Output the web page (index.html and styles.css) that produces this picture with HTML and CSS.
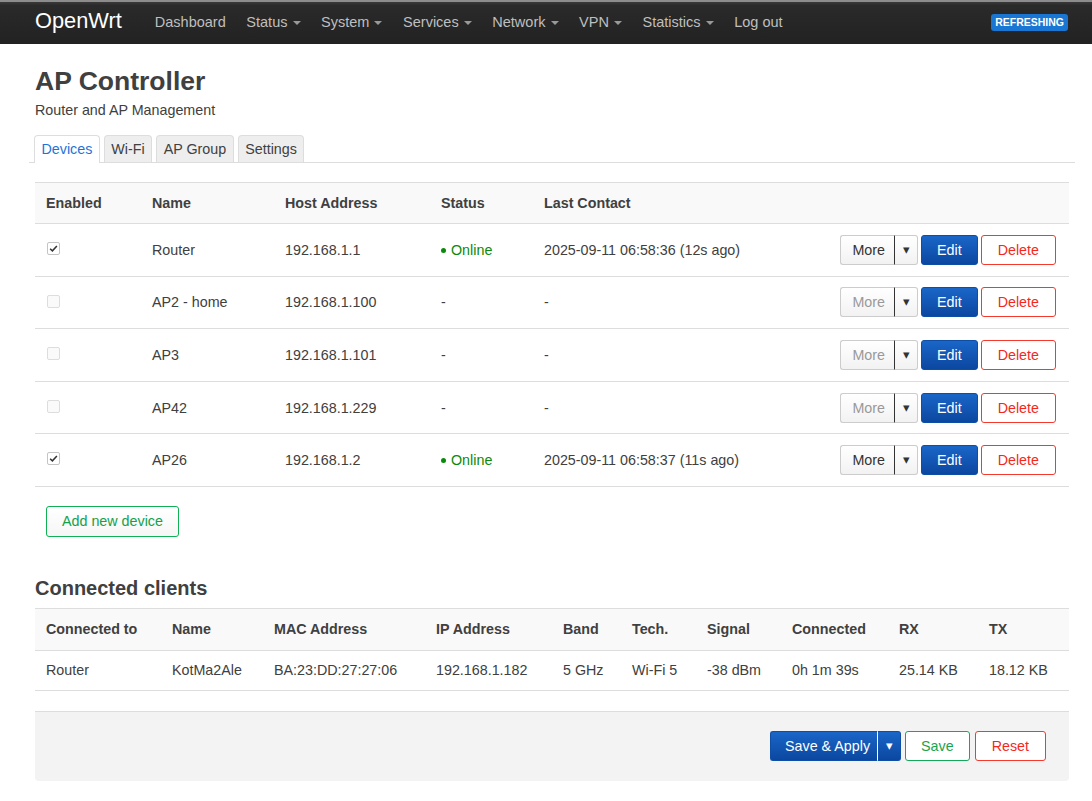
FILE: index.html
```html
<!DOCTYPE html>
<html>
<head>
<meta charset="utf-8">
<link rel="stylesheet" href="styles.css">
</head>
<body>
<header class="topbar">
  <a class="brand">OpenWrt</a>
  <ul class="nav">
    <li>Dashboard</li>
    <li>Status <span class="caret"></span></li>
    <li>System <span class="caret"></span></li>
    <li>Services <span class="caret"></span></li>
    <li>Network <span class="caret"></span></li>
    <li>VPN <span class="caret"></span></li>
    <li>Statistics <span class="caret"></span></li>
    <li>Log out</li>
  </ul>
  <span class="badge">REFRESHING</span>
</header>

<main class="container">
  <h2 class="title">AP Controller</h2>
  <div class="desc">Router and AP Management</div>

  <ul class="tabs">
    <li class="tab active">Devices</li>
    <li class="tab">Wi-Fi</li>
    <li class="tab">AP Group</li>
    <li class="tab">Settings</li>
  </ul>

  <table class="tbl devices">
    <thead>
      <tr><th class="c1">Enabled</th><th class="c2">Name</th><th class="c3">Host Address</th><th class="c4">Status</th><th class="c5">Last Contact</th><th></th></tr>
    </thead>
    <tbody>
      <tr>
        <td><span class="cb on"><svg viewBox="0 0 13 13" width="11" height="11"><path d="M2.5 6.8 L5.2 9.3 L10.5 3.6" fill="none" stroke="#333" stroke-width="1.8"/></svg></span></td>
        <td>Router</td><td>192.168.1.1</td><td class="online"><span class="dot"></span>Online</td><td>2025-09-11 06:58:36 (12s ago)</td>
        <td class="acts"><span class="split"><span class="btn more">More</span><span class="btn drop">&#9662;</span></span><span class="btn edit">Edit</span><span class="btn del">Delete</span></td>
      </tr>
      <tr>
        <td><span class="cb"></span></td>
        <td>AP2 - home</td><td>192.168.1.100</td><td>-</td><td>-</td>
        <td class="acts"><span class="split"><span class="btn more dis">More</span><span class="btn drop">&#9662;</span></span><span class="btn edit">Edit</span><span class="btn del">Delete</span></td>
      </tr>
      <tr>
        <td><span class="cb"></span></td>
        <td>AP3</td><td>192.168.1.101</td><td>-</td><td>-</td>
        <td class="acts"><span class="split"><span class="btn more dis">More</span><span class="btn drop">&#9662;</span></span><span class="btn edit">Edit</span><span class="btn del">Delete</span></td>
      </tr>
      <tr>
        <td><span class="cb"></span></td>
        <td>AP42</td><td>192.168.1.229</td><td>-</td><td>-</td>
        <td class="acts"><span class="split"><span class="btn more dis">More</span><span class="btn drop">&#9662;</span></span><span class="btn edit">Edit</span><span class="btn del">Delete</span></td>
      </tr>
      <tr>
        <td><span class="cb on"><svg viewBox="0 0 13 13" width="11" height="11"><path d="M2.5 6.8 L5.2 9.3 L10.5 3.6" fill="none" stroke="#333" stroke-width="1.8"/></svg></span></td>
        <td>AP26</td><td>192.168.1.2</td><td class="online"><span class="dot"></span>Online</td><td>2025-09-11 06:58:37 (11s ago)</td>
        <td class="acts"><span class="split"><span class="btn more">More</span><span class="btn drop">&#9662;</span></span><span class="btn edit">Edit</span><span class="btn del">Delete</span></td>
      </tr>
    </tbody>
  </table>

  <div class="addrow"><span class="btn add">Add new device</span></div>

  <h3 class="subtitle">Connected clients</h3>
  <table class="tbl clients">
    <thead>
      <tr><th class="k1">Connected to</th><th class="k2">Name</th><th class="k3">MAC Address</th><th class="k4">IP Address</th><th class="k5">Band</th><th class="k6">Tech.</th><th class="k7">Signal</th><th class="k8">Connected</th><th class="k9">RX</th><th>TX</th></tr>
    </thead>
    <tbody>
      <tr><td>Router</td><td>KotMa2Ale</td><td>BA:23:DD:27:27:06</td><td>192.168.1.182</td><td>5 GHz</td><td>Wi-Fi 5</td><td>-38 dBm</td><td>0h 1m 39s</td><td>25.14 KB</td><td>18.12 KB</td></tr>
    </tbody>
  </table>

  <div class="actions">
    <span class="split apply"><span class="btn primary">Save &amp; Apply</span><span class="btn primary pdrop">&#9662;</span></span>
    <span class="btn save">Save</span>
    <span class="btn reset">Reset</span>
  </div>
</main>
</body>
</html>
```

FILE: styles.css
```css
* { box-sizing: border-box; }
html, body { margin: 0; padding: 0; }
body {
  font-family: "Liberation Sans", Arial, sans-serif;
  font-size: 14.3px;
  line-height: 20px;
  color: #404040;
  background: #fff;
}

.topbar {
  height: 44px;
  background: linear-gradient(#3a3a3a 0, #2a2a2a 8%, #222 100%);
  border-top: 2px solid #8c8c8c;
  display: flex;
  align-items: center;
  padding-left: 35px;
  padding-right: 24px;
}
.brand {
  color: #fff;
  font-size: 21.8px;
  line-height: 24px;
  margin-right: 22px;
  margin-top: -4px;
}
.nav {
  list-style: none;
  margin: 0;
  padding: 0;
  display: flex;
  flex: 1;
  margin-top: -2px;
}
.nav li {
  color: #bfbfbf;
  font-size: 14.5px;
  padding: 0 10.3px;
  white-space: nowrap;
}
.nav li:first-child { padding-left: 11px; }
.caret {
  display: inline-block;
  width: 0; height: 0;
  border-left: 4px solid transparent;
  border-right: 4px solid transparent;
  border-top: 4px solid #999;
  vertical-align: middle;
  margin-left: 1px;
}
.badge {
  background: #1976d2;
  color: #fff;
  font-size: 10.5px;
  font-weight: bold;
  line-height: 17px;
  padding: 0 4px;
  border-radius: 3px;
  margin-top: -2px;
}

.container {
  padding: 0 23px 20px 35px;
}
.title {
  font-size: 26.5px;
  line-height: 32px;
  font-weight: bold;
  margin: 21px 0 0;
  color: #404040;
}
.desc {
  margin-top: 3px;
  line-height: 20px;
}

.tabs {
  list-style: none;
  margin: 15px -6px 0;
  padding: 0 0 0 5px;
  display: flex;
  gap: 4px;
  border-bottom: 1px solid #ddd;
  height: 28px;
}
.tab {
  height: 27px;
  line-height: 26px;
  padding: 0 6.5px;
  border: 1px solid #ddd;
  border-bottom: none;
  border-radius: 4px 4px 0 0;
  background: #eee;
  color: #404040;
}
.tab.active {
  background: #fff;
  color: #1e74d6;
  height: 28px;
}

.tbl {
  width: 100%;
  border-collapse: collapse;
}
.tbl th {
  text-align: left;
  font-weight: bold;
  background: #f9f9f9;
  border-top: 1px solid #ddd;
  border-bottom: 1px solid #ddd;
  padding: 0 11px;
}
.tbl td {
  padding: 0 11px;
  border-bottom: 1px solid #ddd;
  white-space: nowrap;
}
.devices { margin-top: 19px; }
.devices th { height: 41px; }
.devices td { height: 52.6px; }
.c1 { width: 106px; }
.c2 { width: 133px; }
.c3 { width: 156px; }
.c4 { width: 103px; }
.c5 { width: 260px; }

.cb {
  display: inline-flex;
  align-items: center;
  justify-content: center;
  width: 13px; height: 13px;
  border: 1px solid #ddd;
  border-radius: 2px;
  background: #fafafa;
  vertical-align: middle;
  margin-left: 1px;
  margin-top: -5px;
}
.cb.on { border-color: #c4c4c4; background: #fff; }

.online { color: #0a8a0a; }
.dot {
  display: inline-block;
  width: 5px; height: 5px;
  border-radius: 50%;
  background: #0a8a0a;
  vertical-align: middle;
  margin-right: 5px;
  margin-top: -2px;
}

.acts {
  text-align: right;
  padding-right: 13px !important;
  font-size: 0;
}
.btn {
  display: inline-block;
  font-size: 14.3px;
  height: 30px;
  line-height: 28px;
  padding: 0 13px;
  border: 1px solid #ccc;
  border-radius: 3px;
  background: linear-gradient(#fff, #f2f2f2);
  color: #333;
  vertical-align: middle;
  white-space: nowrap;
}
.split { display: inline-flex; vertical-align: middle; }
.split .btn:first-child { border-top-right-radius: 0; border-bottom-right-radius: 0; border-right: 1px solid #333; }
.split .btn:last-child { border-top-left-radius: 0; border-bottom-left-radius: 0; border-left: none; }
.btn.more { padding: 0 9px 0 11px; }
.btn.more.dis { color: #999; }
.btn.drop { padding: 0 7px 0 8px; font-size: 13px; color: #333; }
.btn.edit {
  margin-left: 3px;
  padding: 0 15px;
  background: linear-gradient(#1a66c8, #0b47a0);
  border-color: #0e4ea6;
  color: #fff;
}
.btn.del {
  margin-left: 3px;
  padding: 0 16px;
  background: #fff;
  border-color: #f43a2c;
  color: #f3281c;
}

.addrow { padding: 19px 0 0 11px; }
.btn.add {
  height: 31px;
  padding: 0 15px;
  border-color: #12b054;
  color: #14a04c;
  background: linear-gradient(#fff, #f6f6f6);
}

.subtitle {
  font-size: 20px;
  line-height: 24px;
  font-weight: bold;
  margin: 39px 0 0;
  color: #404040;
}
.clients { margin-top: 8px; }
.clients th { height: 42px; }
.clients td { height: 40px; }
.k1 { width: 126px; }
.k2 { width: 102px; }
.k3 { width: 162px; }
.k4 { width: 127px; }
.k5 { width: 69px; }
.k6 { width: 75px; }
.k7 { width: 85px; }
.k8 { width: 107px; }
.k9 { width: 90px; }

.actions {
  margin-top: 20px;
  height: 70px;
  background: #f3f3f3;
  border-top: 1px solid #ddd;
  border-radius: 0 0 4px 4px;
  display: flex;
  justify-content: flex-end;
  align-items: center;
  gap: 4px;
  padding: 0 23px 0 0;
}
.btn.primary {
  background: linear-gradient(#1a66c8, #0b47a0);
  border-color: #0e4ea6;
  color: #fff;
}
.apply .btn:first-child { padding: 0 7px 0 14px; border-right: 1px solid #fff; }
.apply .btn.pdrop { padding: 0 7px 0 8px; font-size: 13px; }
.btn.save {
  background: #fff;
  border-color: #16a85a;
  color: #1aa34a;
  padding: 0 15px;
}
.btn.reset {
  background: #fff;
  border-color: #f43a2c;
  color: #f3281c;
  padding: 0 16px;
  margin-left: 1px;
}
```
